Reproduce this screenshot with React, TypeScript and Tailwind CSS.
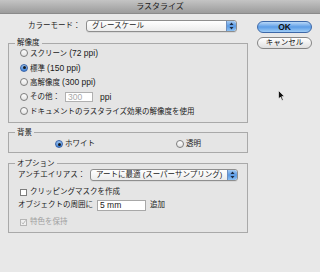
import { FC, PropsWithChildren } from "react";

const font = { fontFamily: '"Liberation Sans", "Noto Sans CJK JP", sans-serif' };

const Radio: FC<{ checked?: boolean }> = ({ checked }) =>
    checked ? (
        <span className="w-[8px] h-[8px] rounded-full border border-[#3a64a8] bg-gradient-to-b from-[#9cc4f0] to-[#3f82d8] flex items-center justify-center flex-shrink-0">
            <span className="w-[3px] h-[3px] rounded-full bg-[#1a1a1a]" />
        </span>
    ) : (
        <span className="w-[8px] h-[8px] rounded-full border border-[#7d7d7d] bg-gradient-to-b from-[#ffffff] to-[#e2e2e2] flex-shrink-0" />
    );

const Check: FC<{ checked?: boolean; disabled?: boolean }> = ({ checked, disabled }) => (
    <span
        className={
            "w-[7px] h-[7px] border flex items-center justify-center flex-shrink-0 " +
            (disabled ? "border-[#b5b5b5] bg-[#f0f0f0]" : "border-[#7d7d7d] bg-white")
        }
    >
        {checked && (
            <svg width="7" height="7" viewBox="0 0 7 7">
                <path d="M1 3.5 L3 5.5 L6.5 0.5" fill="none" stroke={disabled ? "#a0a0a0" : "#222"} strokeWidth="1" />
            </svg>
        )}
    </span>
);

const Stepper: FC = () => (
    <span className="w-[10px] self-stretch rounded-r-[2px] bg-gradient-to-b from-[#a7ccf2] via-[#5a9ae4] to-[#8cc0f2] border-l border-[#6e8fbf] flex items-center justify-center">
        <svg width="5" height="8" viewBox="0 0 5 8">
            <path d="M2.5 0.5 L4.5 3 L0.5 3 Z" fill="#1c2a40" />
            <path d="M2.5 7.5 L4.5 5 L0.5 5 Z" fill="#1c2a40" />
        </svg>
    </span>
);

const Select: FC<PropsWithChildren<{ width: string }>> = ({ width, children }) => (
    <div
        className={
            width +
            " h-[12px] flex items-stretch rounded-[3px] border border-[#8e8e8e] bg-gradient-to-b from-[#ffffff] to-[#ececec] shadow-[0_1px_0_#d8d8d8] overflow-hidden"
        }
    >
        <span className="flex-1 flex items-center pl-[5px] text-[#1a1a1a]">{children}</span>
        <Stepper />
    </div>
);

const Group: FC<PropsWithChildren<{ title: string; className?: string }>> = ({ title, className, children }) => (
    <fieldset className={"w-[240px] border border-[#a9a9a9] bg-[#e5e5e5] " + (className ?? "")}>
        <legend className="ml-[6px] px-[2px] h-[10px] leading-[10px] text-[#1a1a1a]">{title}</legend>
        {children}
    </fieldset>
);

const RadioRow: FC<PropsWithChildren<{ checked?: boolean }>> = ({ checked, children }) => (
    <div className="h-[14.5px] flex items-center gap-[2px] pl-[11px]">
        <Radio checked={checked} />
        <span className="text-[#1a1a1a]">{children}</span>
    </div>
);

// latin runs are a touch larger than the kana in the original
const L: FC<PropsWithChildren> = ({ children }) => <span className="text-[8.5px]">{children}</span>;

export default function App() {
    return (
        <div className="w-[320px] h-[272px] bg-[#e8e8e8] relative overflow-hidden text-[7.5px] leading-none" style={font}>
            <div className="h-[14px] bg-gradient-to-b from-[#c4c4c4] to-[#9c9c9c] border-b border-[#8a8a8a] flex items-center justify-center text-[#1a1a1a] text-[8px]">
                ラスタライズ
            </div>

            <div className="flex">
                <div className="w-[248px] pl-[8px]">
                    <div className="mt-[6px] h-[12px] flex items-center">
                        <span className="w-[78px] pl-[20px] text-[#1a1a1a]">カラーモード：</span>
                        <Select width="w-[151px]">グレースケール</Select>
                    </div>

                    <Group title="解像度" className="mt-[6px] pb-[3px]">
                        <div className="-mt-[2px]">
                            <RadioRow>
                                スクリーン <L>(72 ppi)</L>
                            </RadioRow>
                            <RadioRow checked>
                                標準 <L>(150 ppi)</L>
                            </RadioRow>
                            <RadioRow>
                                高解像度 <L>(300 ppi)</L>
                            </RadioRow>
                            <div className="h-[14.5px] flex items-center gap-[2px] pl-[11px]">
                                <Radio />
                                <span className="w-[33px] text-[#1a1a1a]">その他：</span>
                                <span className="w-[28px] h-[10px] border border-[#b0b0b0] bg-white flex items-center pl-[2px] text-[#a8a8a8] text-[8.5px]">
                                    300
                                </span>
                                <span className="ml-[5px] text-[#1a1a1a] text-[8.5px]">ppi</span>
                            </div>
                            <RadioRow>ドキュメントのラスタライズ効果の解像度を使用</RadioRow>
                        </div>
                    </Group>

                    <Group title="背景" className="mt-[5px] pb-[1px]">
                        <div className="h-[13px] flex items-center pl-[46px]">
                            <span className="w-[121px] flex items-center gap-[2px] text-[#1a1a1a]">
                                <Radio checked />
                                ホワイト
                            </span>
                            <span className="flex items-center gap-[2px] text-[#1a1a1a]">
                                <Radio />
                                透明
                            </span>
                        </div>
                    </Group>

                    <Group title="オプション" className="mt-[6px] pb-[3px]">
                        <div className="h-[13px] flex items-center pl-[9px]">
                            <span className="w-[72px] text-[#1a1a1a]">アンチエイリアス：</span>
                            <Select width="w-[148px]">アートに最適 (スーパーサンプリング)</Select>
                        </div>
                        <div className="mt-[4px] h-[13px] flex items-center gap-[3px] pl-[11px] text-[#1a1a1a]">
                            <Check />
                            クリッピングマスクを作成
                        </div>
                        <div className="h-[13px] flex items-center pl-[9px] text-[#1a1a1a]">
                            <span className="w-[79px]">オブジェクトの周囲に</span>
                            <span className="w-[49px] h-[11px] border border-[#a8a8a8] bg-white flex items-center pl-[2px] text-[8.5px]">
                                5 mm
                            </span>
                            <span className="ml-[4px]">追加</span>
                        </div>
                        <div className="mt-[4px] h-[13px] flex items-center gap-[3px] pl-[11px] text-[#a0a0a0]">
                            <Check checked disabled />
                            特色を保持
                        </div>
                    </Group>
                </div>

                <div className="flex flex-col pl-[9px] pt-[7px] gap-[4px]">
                    <button className="w-[55px] h-[12px] rounded-full border border-[#3d68a8] bg-gradient-to-b from-[#b9d8f7] via-[#5c9de6] to-[#9fcdf6] flex items-center justify-center text-[#111] text-[8.5px] font-semibold">
                        OK
                    </button>
                    <button className="w-[55px] h-[12px] rounded-full border border-[#858585] bg-gradient-to-b from-[#ffffff] via-[#f0f0f0] to-[#dedede] flex items-center justify-center text-[#111]">
                        キャンセル
                    </button>
                </div>
            </div>

            <svg className="absolute left-[278px] top-[90px]" width="8" height="12" viewBox="0 0 8 12">
                <path d="M0.5 0.5 L0.5 9 L2.5 7 L4 10.5 L5.3 10 L3.8 6.6 L6.5 6.6 Z" fill="#111" stroke="#fff" strokeWidth="0.6" />
            </svg>
        </div>
    );
}
